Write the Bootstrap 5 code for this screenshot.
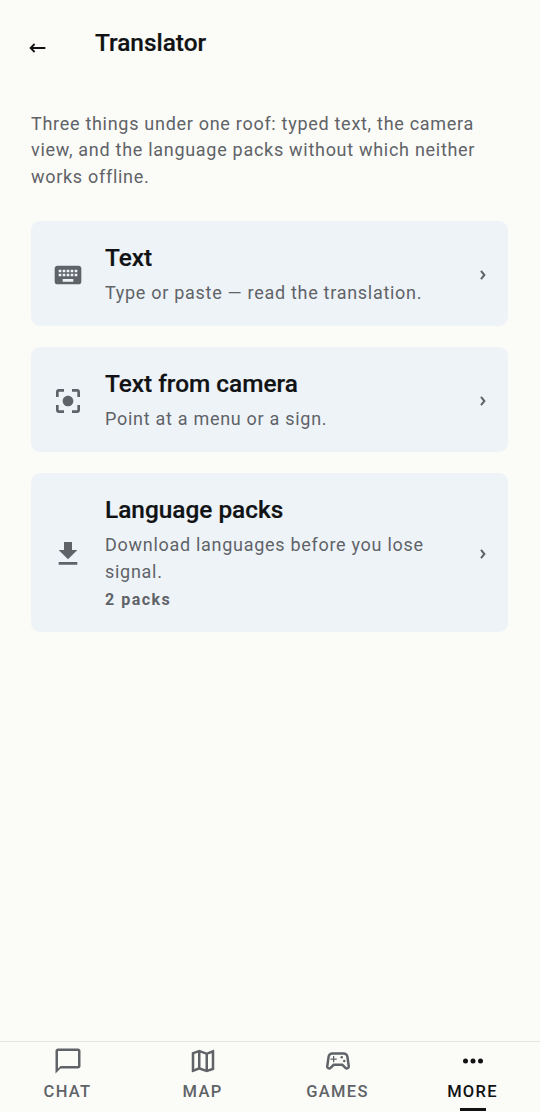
<!doctype html>
<html lang="en">
<head>
<meta charset="utf-8">
<title>Translator</title>
<link rel="stylesheet" href="https://cdn.jsdelivr.net/npm/bootstrap@5.3.0/dist/css/bootstrap.min.css">
<style>
html,body{height:100%;}
body{background:#fbfbf7;font-family:Roboto,"Liberation Sans",sans-serif;color:#101214;}
.app-shell{height:1112px;}
.top-bar{height:87px;padding:0 0 0 29px;}
.back-glyph{width:66px;height:87px;color:#101214;padding-top:41px;}
.back-glyph svg{display:block;}
.page-title{font-size:24.4px;font-weight:500;line-height:32px;margin:27px 0 0;-webkit-text-stroke:.2px #101214;}
.intro{font-size:18px;line-height:26.4px;letter-spacing:.71px;color:#5f6368;margin:0;padding:24px 31px 0;}
.tile-list{padding:31px 32px 0 31px;gap:21px;}
.tile{background:#eef3f8;border-radius:9px;padding:22.5px 21px 20px 21px;gap:21px;color:inherit;text-decoration:none;}
.tile-icon{width:32px;height:32px;fill:#5f6368;flex:none;}
.tile-name{font-size:24.4px;line-height:30px;font-weight:500;color:#101214;margin-top:-1px;margin-bottom:7px;-webkit-text-stroke:.2px #101214;}
.tile-desc{font-size:18px;line-height:26.6px;letter-spacing:.71px;color:#5f6368;}
.tile-meta{font-size:16px;line-height:22.6px;margin-top:4px;letter-spacing:1.5px;font-weight:700;color:#5f6368;}
.tile-chev{flex:none;color:#5f6368;width:10px;margin-right:-1px;}
.tile-chev svg{display:block;}
.bottom-nav{height:71px;border-top:1px solid #e4e4e1;}
.nav-cell{flex:1 1 0;position:relative;color:#5f6368;padding-top:4px;}
.nav-cell svg{width:30px;height:30px;fill:currentColor;display:block;}
.nav-word{font-size:16.5px;line-height:20px;font-weight:500;letter-spacing:1.3px;margin-top:6px;}
.nav-cell.current{color:#101214;}
.nav-bar{position:absolute;left:50%;bottom:1px;width:26px;height:3px;margin-left:-13px;background:#101214;}
</style>
</head>
<body>
<div class="app-shell d-flex flex-column">
  <header class="top-bar d-flex align-items-start flex-none">
    <div class="back-glyph" aria-label="Back">
      <svg width="17" height="14" viewBox="0 0 17 14"><path d="M5.6 3 1.6 7l4 4M1.8 7H16.4" fill="none" stroke="currentColor" stroke-width="1.8"/></svg>
    </div>
    <h1 class="page-title">Translator</h1>
  </header>
  <p class="intro">Three things under one roof: typed text, the camera view, and the language packs without which neither works offline.</p>
  <main class="tile-list d-flex flex-column flex-grow-1">
    <a class="tile d-flex align-items-center" href="#">
      <svg class="tile-icon" viewBox="0 0 24 24"><path d="M20 5H4c-1.1 0-1.99.9-1.99 2L2 17c0 1.1.9 2 2 2h16c1.1 0 2-.9 2-2V7c0-1.1-.9-2-2-2zm-9 3h2v2h-2V8zm0 3h2v2h-2v-2zM8 8h2v2H8V8zm0 3h2v2H8v-2zm-1 2H5v-2h2v2zm0-3H5V8h2v2zm9 7H8v-2h8v2zm0-4h-2v-2h2v2zm0-3h-2V8h2v2zm3 3h-2v-2h2v2zm0-3h-2V8h2v2z"/></svg>
      <div class="flex-grow-1">
        <div class="tile-name">Text</div>
        <div class="tile-desc">Type or paste — read the translation.</div>
      </div>
      <span class="tile-chev"><svg width="10" height="14" viewBox="0 0 10 14"><path d="M3 2.8 6.4 7 3 11.2" fill="none" stroke="currentColor" stroke-width="2"/></svg></span>
    </a>
    <a class="tile d-flex align-items-center" href="#">
      <svg class="tile-icon" viewBox="0 0 24 24"><path d="M12 8c-2.21 0-4 1.79-4 4s1.79 4 4 4 4-1.79 4-4-1.79-4-4-4zm-7 7H3v4c0 1.1.9 2 2 2h4v-2H5v-4zM5 5h4V3H5c-1.1 0-2 .9-2 2v4h2V5zm14-2h-4v2h4v4h2V5c0-1.1-.9-2-2-2zm0 16h-4v2h4c1.1 0 2-.9 2-2v-4h-2v4z"/></svg>
      <div class="flex-grow-1">
        <div class="tile-name">Text from camera</div>
        <div class="tile-desc">Point at a menu or a sign.</div>
      </div>
      <span class="tile-chev"><svg width="10" height="14" viewBox="0 0 10 14"><path d="M3 2.8 6.4 7 3 11.2" fill="none" stroke="currentColor" stroke-width="2"/></svg></span>
    </a>
    <a class="tile d-flex align-items-center" href="#">
      <svg class="tile-icon" viewBox="0 0 24 24"><path d="M19 9h-4V3H9v6H5l7 7 7-7zM5 18v2h14v-2H5z"/></svg>
      <div class="flex-grow-1">
        <div class="tile-name">Language packs</div>
        <div class="tile-desc">Download languages before you lose signal.</div>
        <div class="tile-meta">2 packs</div>
      </div>
      <span class="tile-chev"><svg width="10" height="14" viewBox="0 0 10 14"><path d="M3 2.8 6.4 7 3 11.2" fill="none" stroke="currentColor" stroke-width="2"/></svg></span>
    </a>
  </main>
  <nav class="bottom-nav d-flex">
    <div class="nav-cell d-flex flex-column align-items-center">
      <svg viewBox="0 0 24 24"><path d="M20 2H4c-1.1 0-2 .9-2 2v18l4-4h14c1.1 0 2-.9 2-2V4c0-1.1-.9-2-2-2zm0 14H6l-2 2V4h16v12z"/></svg>
      <span class="nav-word">CHAT</span>
    </div>
    <div class="nav-cell d-flex flex-column align-items-center">
      <svg viewBox="0 0 24 24"><path d="M20.5 3l-.16.03L15 5.1 9 3 3.36 4.9c-.21.07-.36.25-.36.48V20.5c0 .28.22.5.5.5l.16-.03L9 18.9l6 2.1 5.64-1.9c.21-.07.36-.25.36-.48V3.5c0-.28-.22-.5-.5-.5zM10 5.47l4 1.4v11.66l-4-1.4V5.47zm-5 .99l3-1.01v11.7l-3 1.16V6.46zm14 11.08l-3 1.01V6.86l3-1.16v11.84z"/></svg>
      <span class="nav-word">MAP</span>
    </div>
    <div class="nav-cell d-flex flex-column align-items-center">
      <svg viewBox="0 0 24 24"><path d="M21.58 16.09l-1.09-7.66C20.21 6.46 18.52 5 16.53 5H7.47C5.48 5 3.79 6.46 3.51 8.43l-1.09 7.66C2.2 17.63 3.39 19 4.94 19c.68 0 1.32-.27 1.8-.75L9 16h6l2.25 2.25c.48.48 1.13.75 1.8.75 1.56 0 2.75-1.37 2.53-2.91zm-2.1.72c-.08.09-.21.19-.43.19-.15 0-.29-.06-.39-.16L15.83 14H8.17l-2.83 2.84c-.1.1-.24.16-.39.16-.22 0-.35-.1-.43-.19-.08-.09-.16-.24-.14-.47l1.09-7.66C5.61 7.71 6.48 7 7.47 7h9.06c.99 0 1.86.71 2 1.68l1.09 7.66c.03.23-.05.38-.14.47zM9 8H8v2H6v1h2v2h1v-2h2v-1H9V8z"/><circle cx="17" cy="12" r="1"/><circle cx="15" cy="9" r="1"/></svg>
      <span class="nav-word">GAMES</span>
    </div>
    <div class="nav-cell current d-flex flex-column align-items-center">
      <svg viewBox="0 0 24 24"><circle cx="6" cy="12" r="2"/><circle cx="12" cy="12" r="2"/><circle cx="18" cy="12" r="2"/></svg>
      <span class="nav-word">MORE</span>
      <span class="nav-bar"></span>
    </div>
  </nav>
</div>
<script src="https://cdn.jsdelivr.net/npm/bootstrap@5.3.0/dist/js/bootstrap.bundle.min.js"></script>
</body>
</html>
